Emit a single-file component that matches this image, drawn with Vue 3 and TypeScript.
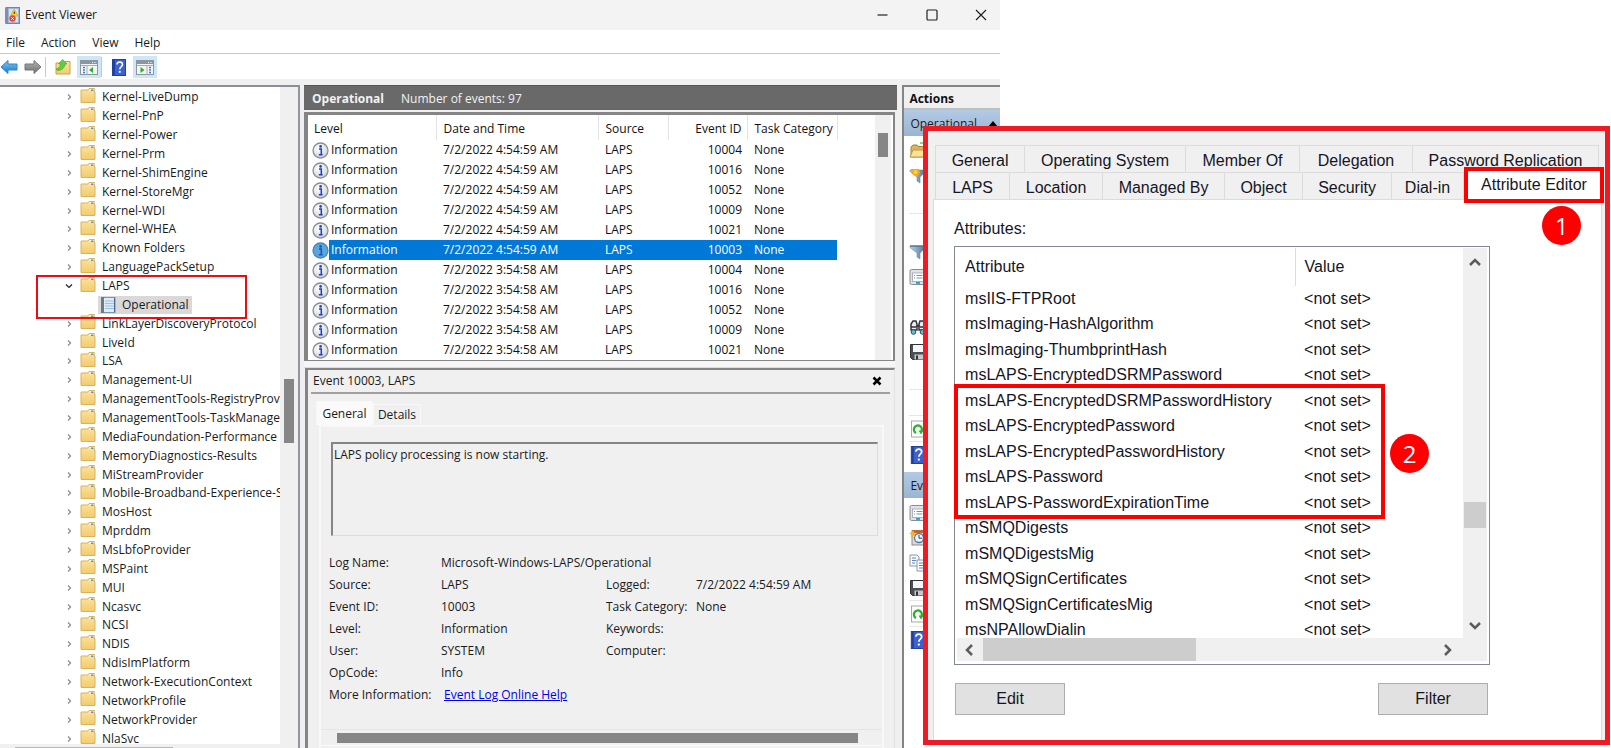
<script setup lang="ts">
import { ref } from 'vue'

interface TreeNode {
  name: string
  open?: boolean
  child?: boolean
}

const nodes: TreeNode[] = [
  ...['Kernel-LiveDump', 'Kernel-PnP', 'Kernel-Power', 'Kernel-Prm', 'Kernel-ShimEngine', 'Kernel-StoreMgr',
    'Kernel-WDI', 'Kernel-WHEA', 'Known Folders', 'LanguagePackSetup'].map((name) => ({ name })),
  { name: 'LAPS', open: true },
  { name: 'Operational', child: true },
  ...['LinkLayerDiscoveryProtocol', 'LiveId', 'LSA', 'Management-UI', 'ManagementTools-RegistryProvi',
    'ManagementTools-TaskManager', 'MediaFoundation-Performance', 'MemoryDiagnostics-Results',
    'MiStreamProvider', 'Mobile-Broadband-Experience-S', 'MosHost', 'Mprddm', 'MsLbfoProvider', 'MSPaint',
    'MUI', 'Ncasvc', 'NCSI', 'NDIS', 'NdisImPlatform', 'Network-ExecutionContext', 'NetworkProfile',
    'NetworkProvider', 'NlaSvc'].map((name) => ({ name })),
]

const menus = ['File', 'Action', 'View', 'Help']

const events = [
  { time: '7/2/2022 4:54:59 AM', id: 10004 },
  { time: '7/2/2022 4:54:59 AM', id: 10016 },
  { time: '7/2/2022 4:54:59 AM', id: 10052 },
  { time: '7/2/2022 4:54:59 AM', id: 10009 },
  { time: '7/2/2022 4:54:59 AM', id: 10021 },
  { time: '7/2/2022 4:54:59 AM', id: 10003 },
  { time: '7/2/2022 3:54:58 AM', id: 10004 },
  { time: '7/2/2022 3:54:58 AM', id: 10016 },
  { time: '7/2/2022 3:54:58 AM', id: 10052 },
  { time: '7/2/2022 3:54:58 AM', id: 10009 },
  { time: '7/2/2022 3:54:58 AM', id: 10021 },
]
const selectedIndex = 5
const description = ref('LAPS policy processing is now starting.')

const logActions = ['open', 'newview', '', '-', '', 'filter', 'props', '', 'find', 'save', '', '-', '', '-', 'refresh', '-', 'help']
const eventActions = ['props', 'task', 'copy', 'save', '-', 'refresh', '-', 'help']

const tabsTop = ['General', 'Operating System', 'Member Of', 'Delegation', 'Password Replication']
const tabsBottom = ['LAPS', 'Location', 'Managed By', 'Object', 'Security', 'Dial-in', 'Attribute Editor']

const attributes = [
  'msIIS-FTPRoot', 'msImaging-HashAlgorithm', 'msImaging-ThumbprintHash', 'msLAPS-EncryptedDSRMPassword',
  'msLAPS-EncryptedDSRMPasswordHistory', 'msLAPS-EncryptedPassword', 'msLAPS-EncryptedPasswordHistory',
  'msLAPS-Password', 'msLAPS-PasswordExpirationTime', 'mSMQDigests', 'mSMQDigestsMig', 'mSMQSignCertificates',
  'mSMQSignCertificatesMig', 'msNPAllowDialin',
]
</script>

<template>
  <div class="desktop">
    <svg class="defs" width="0" height="0" aria-hidden="true">
      <defs>
        <linearGradient id="gFolder" x1="0" y1="0" x2="0" y2="1">
          <stop offset="0" stop-color="#fbe3a0" /><stop offset="1" stop-color="#f3cb6c" />
        </linearGradient>
        <linearGradient id="gBlue" x1="0" y1="0" x2="0" y2="1">
          <stop offset="0" stop-color="#7cc8f5" /><stop offset="1" stop-color="#1678c8" />
        </linearGradient>
        <linearGradient id="gGrey" x1="0" y1="0" x2="0" y2="1">
          <stop offset="0" stop-color="#b4b4b4" /><stop offset="1" stop-color="#6e6e6e" />
        </linearGradient>
        <linearGradient id="gFunnel" x1="0" y1="0" x2="1" y2="0">
          <stop offset="0" stop-color="#b9d3e8" /><stop offset="1" stop-color="#4a6f90" />
        </linearGradient>
        <radialGradient id="gInfo" cx="0.4" cy="0.35" r="0.7">
          <stop offset="0" stop-color="#ffffff" /><stop offset="1" stop-color="#cfd2d6" />
        </radialGradient>
        <symbol id="i-folder" viewBox="0 0 16 15">
          <path d="M1 2h7l1-1.500h5.500V4H15v10.500H1z" fill="url(#gFolder)" stroke="#d8b25c" />
          <path d="M8.500 2.500h6V1H9.500z" fill="#fdf3cf" />
          <rect x="11" y="1.500" width="2.500" height="1.500" fill="#4a9ad4" />
        </symbol>
        <symbol id="i-help" viewBox="0 0 14 17">
          <rect x=".5" y=".5" width="13" height="16" fill="#3c62cf" stroke="#23419c" />
          <rect x="1" y="1" width="2" height="15" fill="#23419c" />
          <path d="M5 5.500c0-3.500 5.500-3.300 5.500 0 0 2.200-2.700 2.300-2.700 4.700" fill="none" stroke="#fff" stroke-width="1.600" />
          <circle cx="7.800" cy="12.800" r="1.100" fill="#fff" />
        </symbol>
        <symbol id="i-open" viewBox="0 0 18 18">
          <path d="M2 5l2-2h4l1 1.500h6V7l-2 8H2z" fill="#d9b45f" stroke="#a8842f" />
          <path d="M1 15l3-7h13l-3 7z" fill="#fae29a" stroke="#c09a43" />
          <path d="M11 1h7" stroke="#4fd34f" stroke-width="1.500" />
        </symbol>
        <symbol id="i-filter" viewBox="0 0 18 18">
          <path d="M1 3h16v1.500L11 10v6l-3-2v-4L1 4.500z" fill="url(#gFunnel)" stroke="#6d8ba5" stroke-width=".6" />
          <path d="M1 3h16" stroke="#4f6b82" stroke-width="1.200" />
        </symbol>
        <symbol id="i-newview" viewBox="0 0 18 18">
          <path d="M1 3h16v1.500L11 10v6l-3-2v-4L1 4.500z" fill="url(#gFunnel)" stroke="#6d8ba5" stroke-width=".6" />
          <path d="M2 2h8l1 4-3 4-5-3z" fill="#f5a623" />
          <circle cx="6.500" cy="5" r="2" fill="#ffd23c" />
        </symbol>
        <symbol id="i-props" viewBox="0 0 18 18">
          <rect x="1" y="1.500" width="16" height="15" rx="1.500" fill="#dfe3e7" stroke="#878d94" />
          <rect x="3.500" y="5" width="12" height="8.500" fill="#fff" stroke="#9aa4ae" stroke-width=".8" />
          <path d="M5 7.500h1M7.500 7.500h6M5 10h1M7.500 10h6" stroke="#7792b0" />
          <rect x="7" y="14" width="4" height="1.800" fill="#1ba1e2" />
        </symbol>
        <symbol id="i-find" viewBox="0 0 18 18">
          <path d="M2 12V6l2-3h3l1 3v6zM10 12V6l1-3h3l2 3v6z" fill="#e9ebee" stroke="#30343a" stroke-width="1.500" />
          <path d="M7 8h4M2 9h5M11 9h5" stroke="#30343a" stroke-width="1.500" />
          <circle cx="4.500" cy="14" r="2.300" fill="#58c3ee" stroke="#445" /><circle cx="13.500" cy="14" r="2.300" fill="#58c3ee" stroke="#445" />
        </symbol>
        <symbol id="i-save" viewBox="0 0 18 18">
          <path d="M1.500 1.500h16v15h-14l-2-2z" fill="#4b4f55" stroke="#2f3237" />
          <rect x="4" y="2" width="11" height="7" fill="#f5f6f7" />
          <rect x="5.500" y="11.500" width="9" height="5" fill="#c7cacd" /><rect x="7" y="12.500" width="2" height="4" fill="#333" />
        </symbol>
        <symbol id="i-refresh" viewBox="0 0 18 18">
          <rect x="2.500" y="1" width="14" height="16" fill="#fbfcfb" stroke="#a6aaa6" />
          <path d="M7 13a4 4 0 1 1 5-1" fill="none" stroke="#2fae2f" stroke-width="2.300" />
          <path d="M9.500 10.500h5l-2.500 4z" fill="#2fae2f" />
        </symbol>
        <symbol id="i-task" viewBox="0 0 18 18">
          <rect x="3" y="2" width="14" height="14" fill="#ded9d1" stroke="#8b8b8b" />
          <rect x="3" y="1" width="14" height="3" fill="#b4693f" />
          <circle cx="10" cy="9" r="4.500" fill="#eef5ff" stroke="#59799b" stroke-width="1.300" />
          <path d="M10 6v3.200h3" fill="none" stroke="#345" />
          <path d="M4 1l1 2.500 2.500.5-2 1.500.5 2.500-2-1.300L1.500 8l.700-2.500L0 4l2.700-.5z" fill="#ffb21e" />
        </symbol>
        <symbol id="i-copy" viewBox="0 0 18 18">
          <path d="M1 1h7l2 2v9H1z" fill="#f7fafd" stroke="#8b97a5" /><path d="M3 4h4M3 6.500h4M3 9h3" stroke="#5d88bb" />
          <path d="M8 6h7l2 2v9H8z" fill="#f7fafd" stroke="#8b97a5" /><path d="M10 9h4M10 11.500h5M10 14h5" stroke="#5d88bb" />
        </symbol>
        <symbol id="i-pane" viewBox="0 0 18 16">
          <rect x=".5" y="1.500" width="17" height="14" fill="#f4f4f4" stroke="#8d959d" />
          <rect x="1" y="2" width="16" height="3" fill="#8d959d" />
          <path d="M12 3.500h1M14.500 3.500h1" stroke="#fff" />
          <path d="M1 6.500h16" stroke="#a8aeb4" />
        </symbol>
      </defs>
    </svg>

    <section class="viewer" aria-label="Event Viewer">
      <header class="titlebar">
        <svg class="app-icon" viewBox="0 0 15 17">
          <rect x="1" y=".5" width="13.500" height="16" fill="#9db6d8" stroke="#6d86ad" />
          <rect x="0" y="1" width="3" height="15" fill="#7f90ad" />
          <rect x="4" y="2" width="9" height="13" fill="#d6e2f2" />
          <path d="M9 2L13 9H5.500z" fill="#ffd21e" stroke="#d9a400" stroke-width=".6" />
          <path d="M9.300 4.500v2.500" stroke="#333" />
          <circle cx="7.500" cy="11.500" r="3.200" fill="#dc4b42" /><path d="M6.300 10.300l2.400 2.400M8.700 10.300l-2.400 2.400" stroke="#fff" />
        </svg>
        <h1>Event Viewer</h1>
        <div class="winbtns">
          <button type="button" aria-label="Minimize"><svg viewBox="0 0 12 12"><path d="M.5 6h10" /></svg></button>
          <button type="button" aria-label="Maximize"><svg viewBox="0 0 12 12"><rect x="1" y="1" width="10" height="10" rx="1" /></svg></button>
          <button type="button" aria-label="Close"><svg viewBox="0 0 12 12"><path d="M1 1l10 10M11 1L1 11" /></svg></button>
        </div>
      </header>
      <nav class="menubar">
        <button v-for="m in menus" :key="m" type="button">{{ m }}</button>
      </nav>
      <div class="toolbar">
        <button type="button" class="back" aria-label="Back"><svg class="arrow" viewBox="0 0 18 16"><path d="M1 8l7-6.500v3.500h9v6H8v3.500z" fill="url(#gBlue)" stroke="#2f86c6" /></svg></button>
        <button type="button" aria-label="Forward"><svg class="arrow" viewBox="0 0 18 16"><path d="M17 8l-7-6.500v3.500H1v6h9v3.500z" fill="url(#gGrey)" stroke="#777" /></svg></button>
        <i class="sep"></i>
        <button type="button" class="wide" aria-label="Open saved log">
          <svg class="t16" viewBox="0 0 16 16">
            <path d="M1 4h8l1-1.500h5V15H1z" fill="url(#gFolder)" stroke="#c9a04a" />
            <path d="M1 10c2-.5 4.500-2 4.500-5H3.500l4-4.500L12 5h-2c0 4-4 6.500-7 6.500z" fill="#5cd03c" stroke="#3aa02a" stroke-width=".6" />
          </svg>
        </button>
        <button type="button" class="on" aria-label="Console tree">
          <svg class="t18" viewBox="0 0 18 16"><use href="#i-pane" /><path d="M3 8.500h2M3 11h2M3 13.500h2" stroke="#3d7fc0" stroke-width="1.300" /><path d="M7 6.500v9" stroke="#a8aeb4" /><path d="M13 8v6l-4-3z" fill="#2fae2f" /></svg>
        </button>
        <i class="sep"></i>
        <button type="button" class="wide" aria-label="Help"><svg class="t14" viewBox="0 0 14 17"><use href="#i-help" /></svg></button>
        <button type="button" class="on" aria-label="Action pane">
          <svg class="t18" viewBox="0 0 18 16"><use href="#i-pane" /><path d="M13 8.500h2M13 11h2M13 13.500h2" stroke="#3d7fc0" stroke-width="1.300" /><path d="M11 6.500v9" stroke="#a8aeb4" /><path d="M4.500 8v6l4-3z" fill="#2fae2f" /></svg>
        </button>
      </div>

      <div class="panes">
        <div class="tree">
          <ul>
            <li v-for="n in nodes" :key="n.name" :class="{ child: n.child }">
              <template v-if="n.child">
                <span class="picked">
                  <svg class="log" viewBox="0 0 16 16">
                    <rect x="2" y=".5" width="13" height="15" fill="#dcecf8" stroke="#7d93b5" />
                    <path d="M5 4h9M5 6.500h9M5 9h9M5 11.500h9" stroke="#9cc0dd" />
                    <rect x="1" y="0" width="3" height="16" fill="#6f7986" />
                    <path d="M14.500 1v14" stroke="#4b679c" />
                  </svg>{{ n.name }}
                </span>
              </template>
              <template v-else>
                <svg class="chev" viewBox="0 0 8 8">
                  <path v-if="n.open" d="M1 2.500l3 3 3-3" class="dark" />
                  <path v-else d="M3 1.500L5.500 4 3 6.500" />
                </svg>
                <svg class="folder" viewBox="0 0 16 15"><use href="#i-folder" /></svg>
                <span>{{ n.name }}</span>
              </template>
            </li>
          </ul>
          <div class="vbar"><i></i></div>
          <div class="hbar"><i></i></div>
          <div class="mark"></div>
        </div>

        <main class="middle">
          <div class="banner"><strong>Operational</strong><span>Number of events: 97</span></div>
          <div class="grid-box">
            <table class="events">
              <colgroup><col class="c1" /><col class="c2" /><col class="c3" /><col class="c4" /><col class="c5" /></colgroup>
              <thead>
                <tr><th>Level</th><th>Date and Time</th><th>Source</th><th class="num">Event ID</th><th>Task Category</th></tr>
              </thead>
              <tbody>
                <tr v-for="(e, i) in events" :key="i" :class="{ sel: i === selectedIndex }">
                  <td>
                    <div class="lvl">
                      <svg viewBox="0 0 17 17">
                        <circle cx="8.500" cy="8.500" r="7.500" :fill="i === selectedIndex ? '#5ba6dc' : 'url(#gInfo)'" :stroke="i === selectedIndex ? '#4c86b0' : '#8b8e92'" stroke-width="1.300" />
                        <path d="M7 7h2.300v5.500M6.800 12.700h3.800" fill="none" :stroke="i === selectedIndex ? '#1a55b5' : '#1c3fc4'" stroke-width="1.500" />
                        <circle cx="8.600" cy="4.400" r="1.300" :fill="i === selectedIndex ? '#1a55b5' : '#1c3fc4'" />
                      </svg>
                      <span>Information</span>
                    </div>
                  </td>
                  <td>{{ e.time }}</td><td>LAPS</td><td class="num">{{ e.id }}</td><td>None</td>
                </tr>
              </tbody>
            </table>
            <div class="vbar"><i></i></div>
          </div>
          <div class="splitter"></div>
          <div class="detail">
            <div class="detail-head">
              <h2>Event 10003, LAPS</h2>
              <button type="button" aria-label="Close details"><svg viewBox="0 0 10 10"><path d="M1.500 1.500l7 7M8.500 1.500l-7 7" /></svg></button>
            </div>
            <div class="dtabs">
              <button type="button" class="active">General</button>
              <button type="button">Details</button>
            </div>
            <div class="dpage">
              <textarea v-model="description" readonly aria-label="Event description"></textarea>
              <dl>
                <dt>Log Name:</dt><dd class="span">Microsoft-Windows-LAPS/Operational</dd>
                <dt>Source:</dt><dd>LAPS</dd><dt>Logged:</dt><dd>7/2/2022 4:54:59 AM</dd>
                <dt>Event ID:</dt><dd>10003</dd><dt>Task Category:</dt><dd>None</dd>
                <dt>Level:</dt><dd>Information</dd><dt>Keywords:</dt><dd></dd>
                <dt>User:</dt><dd>SYSTEM</dd><dt>Computer:</dt><dd></dd>
                <dt>OpCode:</dt><dd class="span">Info</dd>
                <dt>More Information:</dt><dd class="span"><a href="#help">Event Log Online Help</a></dd>
              </dl>
              <div class="dscroll"><i></i></div>
            </div>
          </div>
        </main>

        <aside class="actions">
          <h2>Actions</h2>
          <button type="button" class="group">Operational<svg viewBox="0 0 10 6"><path d="M5 0l5 6H0z" /></svg></button>
          <div class="acts">
            <template v-for="(a, i) in logActions" :key="'l' + i">
              <hr v-if="a === '-'" />
              <button v-else-if="a" type="button" :aria-label="a"><svg :viewBox="a === 'help' ? '0 0 14 17' : '0 0 18 18'"><use :href="'#i-' + a" /></svg></button>
              <div v-else class="blank"></div>
            </template>
          </div>
          <button type="button" class="group">Event 10003</button>
          <div class="acts">
            <template v-for="(a, i) in eventActions" :key="'e' + i">
              <hr v-if="a === '-'" />
              <button v-else type="button" :aria-label="a"><svg :viewBox="a === 'help' ? '0 0 14 17' : '0 0 18 18'"><use :href="'#i-' + a" /></svg></button>
            </template>
          </div>
        </aside>
      </div>
    </section>

    <section class="dialog" aria-label="Attribute Editor">
      <div class="row top">
        <button v-for="t in tabsTop" :key="t" type="button">{{ t }}</button>
      </div>
      <div class="row bottom">
        <button v-for="t in tabsBottom" :key="t" type="button" :class="{ current: t === 'Attribute Editor' }">{{ t }}</button>
      </div>
      <div class="page">
        <span class="badge one">1</span>
        <h3>Attributes:</h3>
        <div class="list">
          <div class="list-body">
            <table>
              <colgroup><col class="name" /><col /></colgroup>
              <thead><tr><th>Attribute</th><th>Value</th></tr></thead>
              <tbody>
                <tr v-for="a in attributes" :key="a"><td>{{ a }}</td><td>&lt;not set&gt;</td></tr>
              </tbody>
            </table>
            <div class="sv">
              <svg viewBox="0 0 12 10"><path d="M1 8l5-5 5 5" /></svg>
              <i></i>
              <svg viewBox="0 0 12 10"><path d="M1 2l5 5 5-5" /></svg>
            </div>
          </div>
          <div class="sh">
            <svg viewBox="0 0 10 12"><path d="M8 1L3 6l5 5" /></svg>
            <i></i>
            <svg viewBox="0 0 10 12"><path d="M2 1l5 5-5 5" /></svg>
          </div>
          <div class="frame"></div>
          <span class="badge two">2</span>
        </div>
        <div class="buttons">
          <button type="button">Edit</button>
          <button type="button">Filter</button>
        </div>
      </div>
    </section>
  </div>
</template>

<style>
body { background: #fff; overflow: hidden; }
</style>

<style scoped>
* { box-sizing: border-box; }
button { font: inherit; color: inherit; border: 0; background: none; padding: 0; margin: 0; }
h1, h2, h3, ul, dl, dd { margin: 0; padding: 0; font-size: inherit; font-weight: 400; }
ul { list-style: none; }
svg { display: block; flex: none; }
.defs { position: absolute; }
.desktop { position: relative; height: 100vh; overflow: hidden; font-family: "Open Sans", "Noto Sans", sans-serif; font-size: 12px; line-height: 16px; color: #1a1a1a; }

.viewer { width: 62.1%; height: 100%; display: flex; flex-direction: column; background: #f0f0f0; }
.titlebar { height: 30px; flex: none; display: flex; align-items: center; background: #f3f3f3; padding-left: 5px; }
.app-icon { width: 15px; height: 17px; margin-right: 5px; }
.winbtns { margin: 0 -5px 0 auto; display: flex; }
.winbtns button { width: 49px; height: 30px; display: flex; align-items: center; justify-content: center; }
.winbtns svg { width: 12px; height: 12px; fill: none; stroke: #222; stroke-width: 1.200; }
.menubar { height: 24px; flex: none; display: flex; align-items: center; gap: 16px; padding: 2px 6px 0; background: #fff; border-bottom: 1px solid #c3cbd2; }
.toolbar { height: 25px; flex: none; display: flex; align-items: center; background: #fff; padding-top: 1px; }
.toolbar button { width: 24px; height: 22px; display: flex; align-items: center; justify-content: center; }
.toolbar .back { width: 18px; margin-right: 3px; }
.toolbar .wide { width: 31px; padding-left: 3px; }
.toolbar .on { background: #cce6fb; }
.toolbar .sep { width: 1px; height: 20px; background: #c8c8c8; }
.arrow { width: 18px; height: 16px; }
.t16 { width: 16px; height: 16px; }
.t18 { width: 18px; height: 16px; }
.t14 { width: 14px; height: 17px; }

.panes { flex: 1; min-height: 0; display: flex; gap: 4px; padding-top: 6px; }
.tree { position: relative; width: 300px; flex: none; display: grid; grid-template-columns: 1fr 18px; grid-template-rows: 1fr 4px; background: #fff; border-top: 2px solid #8a8f98; border-right: 2px solid #8f96a1; overflow: hidden; }
.tree ul { display: flex; flex-direction: column; overflow: hidden; padding-top: 1px; margin-bottom: -4px; min-height: 0; }
.tree li { flex: 1 0 0; min-height: 0; display: flex; align-items: center; padding-left: 65px; white-space: nowrap; line-height: 18px; }
.chev { width: 8px; height: 8px; margin-right: 7px; fill: none; stroke: #8a8a8a; stroke-width: 1.200; }
.chev .dark { stroke: #222; }
.folder { width: 16px; height: 15px; margin-right: 6px; margin-bottom: 4px; }
.tree .child { padding-left: 98px; }
.picked { display: flex; align-items: center; background: #d9d9d9; padding: 0 3px 0 2px; }
.log { width: 16px; height: 16px; margin-right: 6px; }
.vbar { background: #f0f0f0; }
.vbar i { display: block; width: 10px; background: #868686; margin: 292px auto 0; height: 64px; }
.hbar { grid-column: 1 / -1; background: #f0f0f0; z-index: 1; padding: 3px 0 0 15px; }
.hbar i { display: block; width: 158px; height: 2px; background: #b9b9b9; }
.mark { position: absolute; left: 36px; top: 188px; width: 211px; height: 44px; border: 2px solid #ed0c14; z-index: 2; }

.middle { flex: 1; min-width: 0; display: flex; flex-direction: column; }
.banner { height: 25px; flex: none; display: flex; align-items: center; gap: 17px; padding: 2px 0 0 8px; background: #696969; border-top: 1px solid #555; color: #f2f2f2; }
.grid-box { display: flex; flex: none; margin: 2px 2px 0 0; background: #fff; border: 2px solid #858585; border-width: 3px 2px 1px 4px; padding-right: 2px; }
.events { table-layout: fixed; border-collapse: collapse; width: 529px; flex: none; margin-right: auto; color: #111; }
.events th, .events td { padding: 0 7px; text-align: left; font-weight: 400; white-space: nowrap; }
.events th { height: 25px; border-right: 1px solid #e4e4e4; padding-top: 2px; }
.events th:first-child { padding-left: 6px; }
.events td { height: 20px; }
.events .num { text-align: right; padding-right: 5px; }
.events td:first-child { padding: 0 0 0 4px; }
.c1 { width: 128px; } .c2 { width: 162px; } .c3 { width: 70px; } .c4 { width: 79px; } .c5 { width: 90px; }
.lvl { display: flex; align-items: center; }
.lvl svg { width: 17px; height: 17px; }
.lvl span { flex: 1; padding-left: 2px; line-height: 20px; }
.sel { color: #fff; }
.sel td:not(:first-child), .sel .lvl span { background: #0078d7; }
.grid-box .vbar { width: 16px; }
.grid-box .vbar i { margin-top: 18px; height: 24px; }
.splitter { flex: none; height: 7px; margin-right: 2px; background: #f6f6f6; border-bottom: 1px solid #ddd; }
.detail { flex: 1; min-height: 0; display: flex; flex-direction: column; margin: 0 2px 0 1px; border-top: 2px solid #858585; border-left: 3px solid #858585; border-right: 1px solid #e2e2e2; padding: 0 4px 0 3px; }
.detail-head { flex: none; height: 24px; display: flex; align-items: center; justify-content: space-between; padding: 0 8px 0 2px; border-bottom: 2px solid #a0a0a0; }
.detail-head svg { width: 10px; height: 10px; stroke: #000; stroke-width: 2.500; }
.dtabs { flex: none; display: flex; align-items: flex-end; height: 31px; padding-left: 5px; }
.dtabs button { height: 21px; width: 48px; border: 1px solid #f8f8f8; border-bottom: 0; }
.dtabs .active { height: 24px; width: 57px; background: #fafafa; }
.dpage { flex: 1; min-height: 0; margin: 0 6px 0 8px; border: 2px solid #f8f8f8; border-bottom: 0; padding: 15px 4px 0 10px; display: flex; flex-direction: column; }
textarea { font: inherit; color: inherit; display: block; width: 100%; height: 94px; flex: none; resize: none; background: #f0f0f0; border: 1px solid #dcdcdc; border-top: 2px solid #858585; border-left: 2px solid #858585; padding: 3px 1px; outline: 0; }
dl { display: grid; grid-template-columns: 112px 165px 90px 1fr; grid-auto-rows: 22px; line-height: 22px; padding-top: 16px; white-space: nowrap; margin-left: -2px; }
.span { grid-column: span 3; }
a { color: #0000ee; padding-left: 3px; }
.dscroll { margin: auto -4px 2px -10px; height: 17px; border-top: 1px solid #e6e6e6; padding: 3px 24px 0 16px; border-bottom: 1px solid #fafafa; flex: none; }
.dscroll i { display: block; height: 10px; background: #868686; }

.actions { width: 98px; flex: none; margin-left: 1px; background: #fff; border-left: 2px solid #858585; border-top: 2px solid #858585; overflow: hidden; display: flex; flex-direction: column; }
.actions h2 { flex: none; height: 23px; line-height: 24px; padding-left: 5px; font-weight: 700; color: #111; background: #f0f0f0; border-bottom: 2px solid #c0c0c0; }
.group { flex: none; height: 26px; display: flex; align-items: center; justify-content: space-between; padding: 2px 2px 0 6px; white-space: nowrap; background: linear-gradient(#b3cae4, #9ab5d3); }
.group svg { width: 10px; height: 6px; }
.acts { display: flex; flex-direction: column; padding: 2px 0 5px 5px; flex: none; }
.acts button, .blank { height: 25px; display: flex; align-items: center; }
.acts svg { width: 18px; height: 18px; }
.acts hr { width: 100%; height: 1px; margin: 0; border: 0; background: #e6e6e6; }

.dialog { position: absolute; left: 57.3%; right: 1px; top: 126px; bottom: 3px; border: 5px solid #ed1c24; background: #f0f0f0; display: flex; flex-direction: column; font-family: "Liberation Sans", Arial, sans-serif; font-size: 16px; line-height: 20px; color: #15151f; }
.row { display: grid; flex: none; }
.row button { border: 1px solid #dcdcdc; border-width: 1px 1px 0 0; white-space: nowrap; }
.row button:first-child { border-left-width: 1px; }
.top { margin: 14px 6px 0 7px; height: 27px; grid-template-columns: 90fr 161fr 114fr 113fr 186fr; }
.top button { padding-top: 3px; }
.bottom { margin: 0 1px 0 7px; height: 27px; grid-template-columns: 75fr 93fr 122fr 78fr 89fr 72fr 140fr; }
.row .current { position: relative; z-index: 1; height: 36px; margin-top: -5px; background: #fff; border: 4px solid #fe0000; }
.page { position: relative; flex: 1; min-height: 0; margin: 0 3px 0 5px; padding: 19px 0 0 20px; background: #fff; border: 1px solid #dcdcdc; border-bottom: 0; }
.list { position: relative; width: 536px; margin-top: 7px; border: 1px solid #828790; padding: 1px 2px 3px; }
.list-body { display: flex; height: 390px; overflow: hidden; }
.list table { flex: 1; border-collapse: collapse; table-layout: fixed; }
.list .name { width: 338px; }
.list th, .list td { padding: 0 0 0 9px; text-align: left; font-weight: 400; white-space: nowrap; }
.list th { height: 38px; }
.list th:first-child { border-right: 1px solid #dcdcdc; }
.list th:first-child, .list td:first-child { padding-left: 8px; }
.list tbody tr { height: 25px; }
.list tbody tr:nth-child(even) { height: 26px; }
.sv { width: 24px; height: 390px; display: flex; flex-direction: column; align-items: center; background: #f0f0f0; padding: 9px 0 7px; }
.sv i { width: 22px; height: 26px; background: #cdcdcd; margin: 235px 0 auto; }
.sv svg { width: 12px; height: 10px; }
.sh svg { width: 10px; height: 12px; }
.sv svg, .sh svg { fill: none; stroke: #5c5c5c; stroke-width: 2.500; }
.sh { height: 23px; display: flex; align-items: center; background: #f0f0f0; padding: 0 34px 0 7px; }
.sh i { width: 213px; height: 23px; background: #cdcdcd; margin: 0 auto 0 9px; }
.frame { position: absolute; left: -1px; top: 137px; width: 431px; height: 135px; border: 4px solid #fe0000; }
.badge { position: absolute; width: 39px; height: 39px; border-radius: 50%; background: #fe0000; color: #fff; font: 400 24px/39px "Open Sans", sans-serif; text-align: center; }
.one { right: 20px; top: 6px; }
.two { right: 60px; top: 187px; }
.buttons { width: 533px; display: flex; justify-content: space-between; margin: 18px 0 0 1px; }
.buttons button { width: 110px; height: 32px; background: #e1e1e1; border: 1px solid #adadad; }
</style>
